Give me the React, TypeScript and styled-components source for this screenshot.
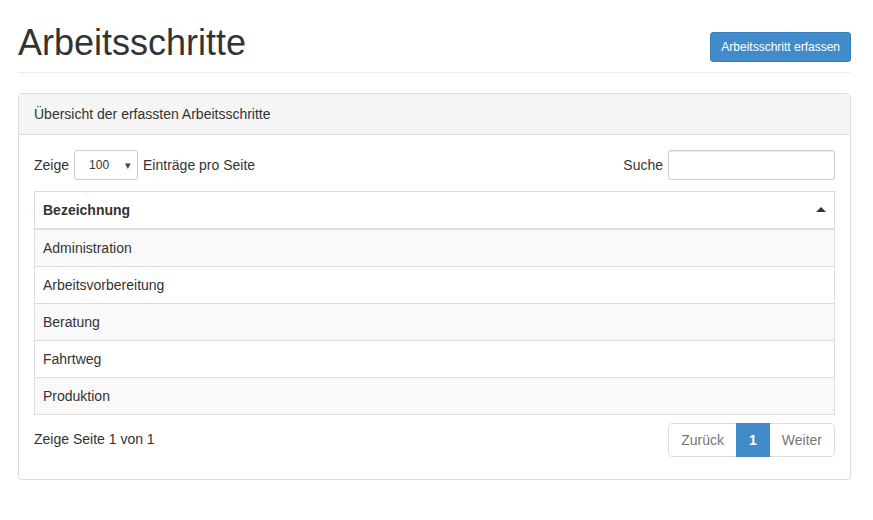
import React from "react";
import styled, { createGlobalStyle } from "styled-components";

const GlobalStyle = createGlobalStyle`
  * {
    box-sizing: border-box;
  }
  body {
    margin: 0;
    background: #fff;
    color: #333;
    font-family: "Liberation Sans", Arial, Helvetica, sans-serif;
    font-size: 14px;
    line-height: 20px;
  }
`;

const Page = styled.div`
  width: 833px;
  margin-left: 18px;
  padding-top: 20px;
`;

/** Seitenkopf mit Titel und Button */
const PageHeader = styled.div`
  display: flex;
  justify-content: space-between;
  align-items: flex-start;
  padding-bottom: 9px;
  border-bottom: 1px solid #eee;
  margin-bottom: 20px;
`;

const Title = styled.h1`
  margin: 3px 0 0;
  font-size: 36px;
  font-weight: 500;
  line-height: 40px;
  color: #333;
`;

const PrimaryButton = styled.button`
  margin-top: 12px;
  height: 30px;
  padding: 0 10px;
  border: 1px solid #357ebd;
  border-radius: 3px;
  background-color: #428bca;
  color: #fff;
  font-family: inherit;
  font-size: 12px;
  font-weight: normal;
  line-height: 28px;
  cursor: pointer;
`;

const Panel = styled.div`
  border: 1px solid #ddd;
  border-radius: 4px;
  box-shadow: 0 1px 1px rgba(0, 0, 0, 0.05);
`;

const PanelHeading = styled.div`
  padding: 10px 15px;
  background-color: #f5f5f5;
  border-bottom: 1px solid #ddd;
  border-radius: 3px 3px 0 0;
`;

const PanelBody = styled.div`
  padding: 15px 15px 22px;
`;

const ToolRow = styled.div`
  display: flex;
  justify-content: space-between;
  align-items: center;
  margin-bottom: 11px;
`;

const Label = styled.label`
  display: flex;
  align-items: center;
  gap: 5px;
`;

const SelectBox = styled.div`
  position: relative;
  width: 64px;
  height: 30px;
  border: 1px solid #ccc;
  border-radius: 3px;
  font-size: 12px;
  line-height: 28px;
  padding-left: 14px;
  &::after {
    content: "▾";
    position: absolute;
    right: 6px;
    top: 0;
    font-size: 11px;
    color: #444;
  }
`;

const SearchInput = styled.input`
  width: 167px;
  height: 30px;
  border: 1px solid #ccc;
  border-radius: 3px;
  box-shadow: inset 0 1px 1px rgba(0, 0, 0, 0.075);
  outline: none;
`;

const Table = styled.table`
  width: 100%;
  border-collapse: collapse;
  border: 1px solid #ddd;
`;

const HeadCell = styled.th`
  position: relative;
  text-align: left;
  padding: 8px;
  border: 1px solid #ddd;
  border-bottom-width: 2px;
  font-weight: bold;
  &::after {
    content: "";
    position: absolute;
    right: 8px;
    top: 15px;
    border-left: 5px solid transparent;
    border-right: 5px solid transparent;
    border-bottom: 5px solid #333;
  }
`;

const Row = styled.tr<{ $striped: boolean }>`
  background-color: ${(p) => (p.$striped ? "#f9f9f9" : "#fff")};
`;

const Cell = styled.td`
  padding: 8px;
  border-top: 1px solid #ddd;
`;

const FooterRow = styled.div`
  display: flex;
  justify-content: space-between;
  align-items: flex-start;
  margin-top: 8px;
`;

const Info = styled.div`
  padding-top: 6px;
`;

const Pagination = styled.ul`
  display: flex;
  margin: 0;
  padding: 0;
  list-style: none;
`;

const PageItem = styled.li<{ $active?: boolean }>`
  padding: 6px 12px;
  margin-left: -1px;
  border: 1px solid ${(p) => (p.$active ? "#428bca" : "#ddd")};
  background-color: ${(p) => (p.$active ? "#428bca" : "#fff")};
  color: ${(p) => (p.$active ? "#fff" : "#777")};
  font-weight: ${(p) => (p.$active ? "bold" : "normal")};
  position: relative;
  z-index: ${(p) => (p.$active ? 2 : 1)};
  &:first-child {
    margin-left: 0;
    border-radius: 4px 0 0 4px;
  }
  &:last-child {
    border-radius: 0 4px 4px 0;
  }
`;

const arbeitsschritte = [
  "Administration",
  "Arbeitsvorbereitung",
  "Beratung",
  "Fahrtweg",
  "Produktion",
];

const App: React.FC = () => {
  return (
    <Page>
      <GlobalStyle />
      <PageHeader>
        <Title>Arbeitsschritte</Title>
        <PrimaryButton type="button">Arbeitsschritt erfassen</PrimaryButton>
      </PageHeader>
      <Panel>
        <PanelHeading>Übersicht der erfassten Arbeitsschritte</PanelHeading>
        <PanelBody>
          <ToolRow>
            <Label>
              Zeige <SelectBox>100</SelectBox> Einträge pro Seite
            </Label>
            <Label>
              Suche <SearchInput type="text" />
            </Label>
          </ToolRow>
          <Table>
            <thead>
              <tr>
                <HeadCell>Bezeichnung</HeadCell>
              </tr>
            </thead>
            <tbody>
              {arbeitsschritte.map((name, i) => (
                <Row key={name} $striped={i % 2 === 0}>
                  <Cell>{name}</Cell>
                </Row>
              ))}
            </tbody>
          </Table>
          <FooterRow>
            <Info>Zeige Seite 1 von 1</Info>
            <Pagination>
              <PageItem>Zurück</PageItem>
              <PageItem $active>1</PageItem>
              <PageItem>Weiter</PageItem>
            </Pagination>
          </FooterRow>
        </PanelBody>
      </Panel>
    </Page>
  );
};

export default App;
